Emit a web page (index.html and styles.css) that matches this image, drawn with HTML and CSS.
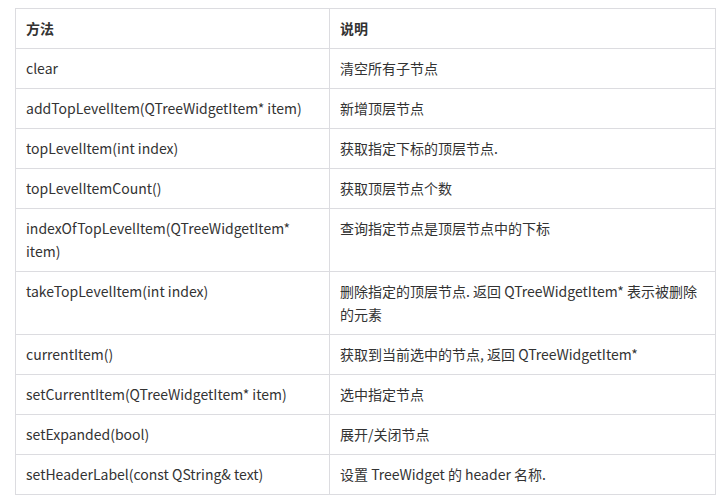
FILE: index.html
```html
<!DOCTYPE html>
<html lang="zh">
<head>
<meta charset="utf-8">
<link rel="stylesheet" href="styles.css">
</head>
<body>
<div class="wrap">
<table class="api">
<colgroup><col class="c1"><col class="c2"></colgroup>
<thead>
<tr><th>方法</th><th>说明</th></tr>
</thead>
<tbody>
<tr><td>clear</td><td>清空所有子节点</td></tr>
<tr><td>addTopLevelItem(QTreeWidgetItem* item)</td><td>新增顶层节点</td></tr>
<tr><td>topLevelItem(int index)</td><td>获取指定下标的顶层节点.</td></tr>
<tr><td>topLevelItemCount()</td><td>获取顶层节点个数</td></tr>
<tr><td>indexOfTopLevelItem(QTreeWidgetItem* item)</td><td>查询指定节点是顶层节点中的下标</td></tr>
<tr><td>takeTopLevelItem(int index)</td><td>删除指定的顶层节点. 返回 QTreeWidgetItem* 表示被删除的元素</td></tr>
<tr><td>currentItem()</td><td>获取到当前选中的节点, 返回 QTreeWidgetItem*</td></tr>
<tr><td>setCurrentItem(QTreeWidgetItem* item)</td><td>选中指定节点</td></tr>
<tr><td>setExpanded(bool)</td><td>展开/关闭节点</td></tr>
<tr><td>setHeaderLabel(const QString&amp; text)</td><td>设置 TreeWidget 的 header 名称.</td></tr>
</tbody>
</table>
</div>
</body>
</html>
```
FILE: styles.css
```css
html, body {
  margin: 0;
  padding: 0;
  background: #fff;
}
.wrap {
  padding: 8px 0 0 15px;
}
.api {
  border-collapse: collapse;
  width: 701px;
  table-layout: fixed;
  font-family: "Noto Sans CJK SC", "Noto Sans", sans-serif;
  font-size: 14px;
  line-height: 23px;
  color: #333;
}
.c1 { width: 314px; }
.api th, .api td {
  border: 1px solid #dcdce0;
  padding: 8px 9px 8px 10px;
  text-align: left;
  vertical-align: top;
}
.api th {
  font-weight: 700;
}
```
